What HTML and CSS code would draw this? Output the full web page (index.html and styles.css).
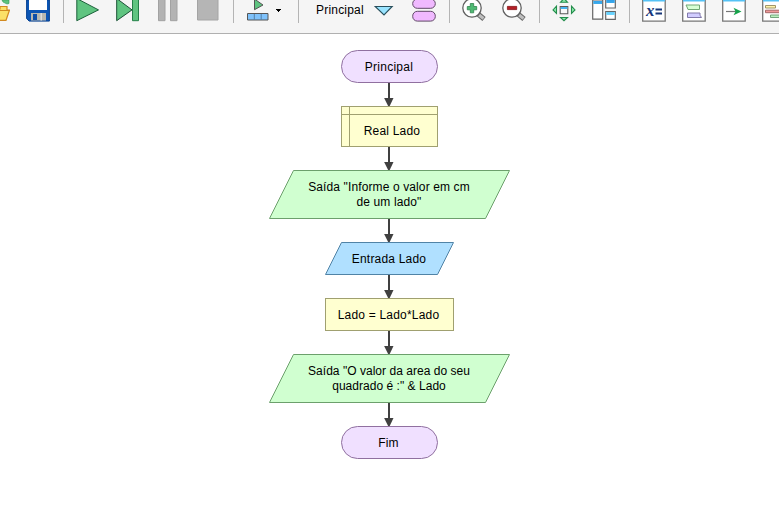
FILE: index.html
```html
<!DOCTYPE html>
<html lang="pt-BR">
<head>
<meta charset="utf-8">
<title>Principal</title>
<link rel="stylesheet" href="styles.css">
</head>
<body>
<svg class="defs" width="0" height="0" aria-hidden="true">
  <defs>
    <linearGradient id="bar" x1="0" y1="0" x2="0" y2="1"><stop offset="0" stop-color="#2f9fe8"/><stop offset="1" stop-color="#70d8ff"/></linearGradient>
    <symbol id="arrow" viewBox="0 0 11 23"><path d="M4 0h2v16H4z" fill="#404040"/><path d="M.1 15.100h9.400L5.700 23H4.100z" fill="#404040"/></symbol>
    <symbol id="wide" viewBox="0 0 241 49"><path d="M24.5.5h216l-24 48H.5z" fill="#d0ffd0" stroke="#6ca06c"/></symbol>
  </defs>
</svg>
<header class="toolbar">
  <svg class="icon" viewBox="0 0 24 24"><path d="M16 0h7v3.500l-2 .5-4-2z" fill="#5ec27f" stroke="#2f9a55" stroke-width=".6"/><path d="M0 9h14V6.500h7V10h2.500L20 20.300H0z" fill="#fbe068" stroke="#d28a20" stroke-width="1.200"/><path d="M10 10.500h13" stroke="#d28a20"/></svg>
  <svg class="icon" viewBox="0 0 24 24"><path d="M.6 0v18.500l2.500 2.600h20.300V0z" fill="#0c55b4" stroke="#084292"/><path d="M3 0h18v10H3z" fill="#fff"/><path d="M5 13h15v7.500H5z" fill="#b8b8b0"/><path d="M7 14h4v6H7z" fill="#0d4ea8"/><path d="M14.500 13h1.500v7.500h-1.500z" fill="#ddd"/></svg>
  <span class="sep"></span>
  <svg class="icon" viewBox="0 0 24 24"><path d="M.8-1.500V20.700L22.500 9.900z" fill="#5fc480" stroke="#1c603a"/></svg>
  <svg class="icon" viewBox="0 0 24 24"><path d="M.7-1.500v22.200L16 9.900z" fill="#5fc480" stroke="#1c5036"/><path d="M16.500-2h6v22.700h-6z" fill="#5fc480" stroke="#248048"/></svg>
  <svg class="icon" viewBox="0 0 24 24"><path d="M2.500-1h6.500v21.700H2.500zM14.500-1H21v21.700h-6.500z" fill="#b3b3b3" stroke="#a2a2a2"/></svg>
  <svg class="icon" viewBox="0 0 24 24"><path d="M1.500-1h20.500v21H1.500z" fill="#b5b5b5" stroke="#a4a4a4"/></svg>
  <span class="sep"></span>
  <svg class="icon" viewBox="0 0 24 24"><path d="M8.500-1v10.700L17 5z" fill="#5fc480" stroke="#555"/><path d="M1.500 13.500h20.500v6.500H1.500z" fill="#7fc2fb" stroke="#555"/><path d="M8.300 14v6M15.200 14v6" stroke="#5480a8"/></svg>
  <svg class="caret" viewBox="0 0 6 24"><path d="M0 9h5v1H4v1H3v1H2v-1H1v-1H0z"/></svg>
  <span class="sep"></span>
  <span class="module">Principal</span>
  <svg class="icon" viewBox="0 0 24 24"><path d="M3.200 6.500h17L12 15z" fill="#99e4ff" stroke="#294f5c" stroke-width="1.100"/></svg>
  <svg class="icon" viewBox="0 0 24 24"><rect x=".7" y="-1" width="22.600" height="9.300" rx="4.600" fill="#f0b9ff" stroke="#604867"/><rect x=".7" y="11.300" width="22.600" height="9.800" rx="4.600" fill="#f0b9ff" stroke="#604867"/></svg>
  <span class="sep"></span>
  <svg class="icon" viewBox="0 0 24 24"><path d="M16 14l6 5" stroke="#666" stroke-width="5"/><path d="M17 15l4.500 3.500" stroke="#bebebe" stroke-width="3"/><circle cx="10" cy="8" r="9.200" fill="#fff" stroke="#606060" stroke-width="1.300"/><path d="M8.300 3.500h3.400v3h3v3.300h-3v3H8.300v-3h-3V6.500h3z" fill="#4fba73" stroke="#30834d" stroke-width=".8"/></svg>
  <svg class="icon" viewBox="0 0 24 24"><path d="M16 14l6 5" stroke="#666" stroke-width="5"/><path d="M17 15l4.500 3.500" stroke="#bebebe" stroke-width="3"/><circle cx="10" cy="8" r="9.200" fill="#fff" stroke="#606060" stroke-width="1.300"/><path d="M5.400 6.400h9.300v3.200H5.400z" fill="#b41e26" stroke="#851419" stroke-width=".8"/></svg>
  <span class="sep"></span>
  <svg class="icon" viewBox="0 0 24 24"><path d="M8.500 2.300h7L12-1.500zM8.500 17.500h7L12 20.700zM4.500 6.200v7.300L1 9.900zM19.500 6.200v7.300L23 9.900z" fill="#8cecac" stroke="#248c4c" stroke-width="1.100"/><path d="M8.200 6.500h7.600v7.300H8.200z" fill="#f8f8f8" stroke="#5a5a5a" stroke-width="1.100"/><path d="M8.700 7h6.600v2H8.700z" fill="#45b3f2"/></svg>
  <svg class="icon" viewBox="0 0 24 24"><path d="M.7 0h10v19.200H.7zM13.700-1h9.600v9H13.700zM13.700 11.500h9.600v7.800H13.700z" fill="#fff" stroke="#666" stroke-width="1.200"/><path d="M1.300 1h8.800v3H1.300zM14.300 0h8.400v3h-8.400zM14.300 12h8.400v3h-8.400z" fill="url(#bar)"/></svg>
  <span class="sep"></span>
  <svg class="icon" viewBox="0 0 24 24"><path d="M.7-1h22.500v22.200H.7z" fill="#fff" stroke="#777" stroke-width="1.300"/><path d="M1 0h22v1.500H1z" fill="#55c2f5"/><text class="glyph" x="4" y="16">x</text><path d="M13.500 8.500H20v2h-6.500zM13.500 12.500H20v2h-6.500z" fill="#173679"/></svg>
  <svg class="icon" viewBox="0 0 24 24"><path d="M.7-1h22.500v22.200H.7z" fill="#fff" stroke="#777" stroke-width="1.300"/><path d="M1 0h22v1.500H1z" fill="#55c2f5"/><path d="M4 5h13.500v4.500H6L5 7z" fill="#d7ffd4" stroke="#70a774"/><path d="M5.500 13h12.500v2.200l1.500 2.300h-14z" fill="#d1ccff" stroke="#8179aa"/></svg>
  <svg class="icon" viewBox="0 0 24 24"><path d="M.7-1h22.500v22.200H.7z" fill="#fff" stroke="#777" stroke-width="1.300"/><path d="M1 0h22v1.500H1z" fill="#55c2f5"/><path d="M4 11.500h10" stroke="#777" stroke-width="1.200"/><path d="M11.500 7.700l8 3.800-8 3.800 2-3.800z" fill="#16a34b"/></svg>
  <svg class="icon" viewBox="0 0 24 24"><path d="M.7-1h26v22.200H.7z" fill="#fff" stroke="#777" stroke-width="1.300"/><path d="M1 0h22v1.500H1z" fill="#55c2f5"/><path d="M3.500 5.500h10V8h-10z" fill="#fff3aa" stroke="#a09468"/><path d="M3.500 10.200h18v2.500h-18z" fill="#ef9999" stroke="#a56868"/><path d="M8.500 15h15v2.500h-15z" fill="#b9efbd" stroke="#74a47b"/></svg>
</header>
<main class="chart">
  <div class="node terminal start">Principal</div>
  <svg class="arrow"><use href="#arrow"/></svg>
  <div class="node declare">Real Lado</div>
  <svg class="arrow"><use href="#arrow"/></svg>
  <div class="node output"><svg class="shape"><use href="#wide"/></svg><p class="label">Saída "Informe o valor em cm<br>de um lado"</p></div>
  <svg class="arrow"><use href="#arrow"/></svg>
  <div class="node input"><svg class="shape" viewBox="0 0 129 33"><path d="M16.500.5h112l-16 32H.5z" fill="#b0e0ff" stroke="#5083a6"/></svg><p class="label">Entrada Lado</p></div>
  <svg class="arrow"><use href="#arrow"/></svg>
  <div class="node assign">Lado = Lado*Lado</div>
  <svg class="arrow"><use href="#arrow"/></svg>
  <div class="node output result"><svg class="shape"><use href="#wide"/></svg><p class="label">Saída "O valor da area do seu<br>quadrado é :" &amp; Lado</p></div>
  <svg class="arrow"><use href="#arrow"/></svg>
  <div class="node terminal end">Fim</div>
</main>
</body>
</html>
```
FILE: styles.css
```css
* { box-sizing: border-box; }
body {
  margin: 0;
  height: 511px;
  overflow: hidden;
  background: #fff;
  color: #000;
  font: 12px/15px "Liberation Sans", Arial, sans-serif;
}
.defs { display: block; }
.toolbar {
  display: flex;
  gap: 16px;
  height: 34px;
  margin-left: -14px;
  background: #f5f5f5;
  border-bottom: 1px solid #b0b0b0;
}
.icon { flex: 0 0 24px; width: 24px; height: 24px; }
.sep { flex: 0 0 1px; height: 23px; margin: 0 -4px 0 -3px; background: #b4b4b4; }
.caret { flex: 0 0 6px; height: 24px; margin: 0 3px 0 -10px; }
.module {
  flex: 0 0 50px;
  margin: 3px -10px 0 5px;
  white-space: nowrap;
  letter-spacing: 0.2px;
}
.glyph { font: italic bold 17px "Liberation Serif", serif; fill: #173679; }
.chart {
  display: flex;
  flex-direction: column;
  align-items: center;
  padding-top: 16px;
}
.arrow { flex: none; display: block; width: 11px; height: 23px; }
.node {
  flex: none;
  display: grid;
  place-items: center;
  text-align: center;
  white-space: nowrap;
  width: 97px;
  height: 33px;
  padding: 1px 2px 0 0;
  letter-spacing: 0.2px;
}
.terminal { background: #f0e0ff; border: 1px solid #9070a0; border-radius: 17px; }
.start { padding-right: 1px; letter-spacing: 0.25px; }
.declare {
  height: 41px;
  padding: 9px 0 0 5px;
  border: 1px solid #a0a070;
  background:
    linear-gradient(#a0a070, #a0a070) 7px 0 / 1px 100% no-repeat,
    linear-gradient(#a0a070, #a0a070) 0 7px / 100% 1px no-repeat,
    #ffffd0;
}
.assign { width: 129px; background: #ffffd0; border: 1px solid #a0a070; }
.output { width: 241px; height: 49px; letter-spacing: 0.12px; }
.result { letter-spacing: 0.03px; }
.input { width: 129px; }
.shape, .label { grid-area: 1 / 1; margin: 0; }
.shape { width: 100%; height: 100%; }
.output, .input { padding: 0; grid-template: 100% / 100%; }
.output .label { padding-right: 1px; }
.input .label { padding: 1px 1px 0 0; }
```
